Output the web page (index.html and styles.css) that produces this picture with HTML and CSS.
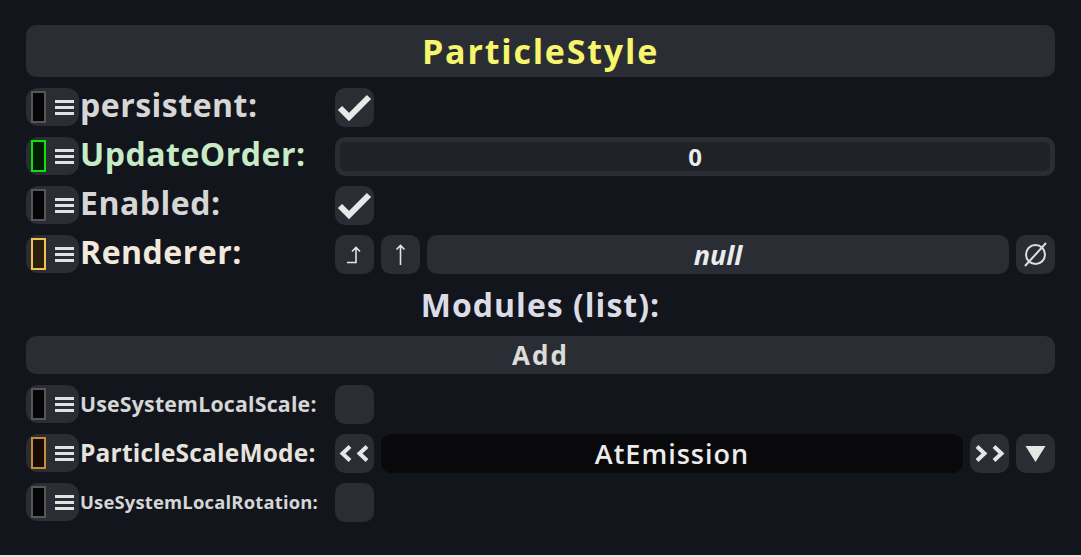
FILE: index.html
```html
<!DOCTYPE html>
<html lang="en">

<head>
    <meta charset="utf-8">
    <meta name="viewport" content="width=device-width, initial-scale=1.0">
    <title>ParticleStyle</title>
    <link rel="stylesheet" href="styles.css">
</head>

<body>
    <main class="panel">
        <h1 class="title">ParticleStyle</h1>

        <!-- persistent -->
        <div class="row">
            <div class="handle"><span class="swatch"></span><span class="burger"><i></i><i></i><i></i></span></div>
            <div class="label">persistent:</div>
            <div class="value">
                <button class="btn">
                    <svg viewBox="0 0 39 39"><polyline points="5,20 14,29 34,9" /></svg>
                </button>
            </div>
        </div>

        <div class="row">
            <div class="handle"><span class="swatch green"></span><span class="burger"><i></i><i></i><i></i></span></div>
            <div class="label label_green">UpdateOrder:</div>
            <div class="value">
                <div class="numfield">0</div>
            </div>
        </div>

        <div class="row">
            <div class="handle"><span class="swatch"></span><span class="burger"><i></i><i></i><i></i></span></div>
            <div class="label">Enabled:</div>
            <div class="value">
                <button class="btn">
                    <svg viewBox="0 0 39 39"><polyline points="5,20 14,29 34,9" /></svg>
                </button>
            </div>
        </div>

        <div class="row">
            <div class="handle"><span class="swatch gold"></span><span class="burger"><i></i><i></i><i></i></span></div>
            <div class="label label_cream">Renderer:</div>
            <div class="value">
                <button class="btn">
                    <svg viewBox="0 0 39 39" class="thin"><path d="M12 27.5 H21 V12.5 M17 16.5 L21 12.5 L25 16.5" /></svg>
                </button>
                <button class="btn">
                    <svg viewBox="0 0 39 39" class="thin"><path d="M19.5 30 V10.5 M15.5 14.5 L19.5 10.5 L23.5 14.5" /></svg>
                </button>
                <div class="field"><em>null</em></div>
                <button class="btn">
                    <svg viewBox="0 0 39 39" class="null"><circle cx="19.5" cy="19.5" r="9.5" /><path d="M9 31 L30 8" /></svg>
                </button>
            </div>
        </div>

        <div class="list_title">Modules (list):</div>

        <button class="add">Add</button>

        <div class="row">
            <div class="handle"><span class="swatch"></span><span class="burger"><i></i><i></i><i></i></span></div>
            <div class="label label_small">UseSystemLocalScale:</div>
            <div class="value">
                <button class="btn"></button>
            </div>
        </div>

        <div class="row">
            <div class="handle"><span class="swatch amber"></span><span class="burger"><i></i><i></i><i></i></span></div>
            <div class="label label_mid">ParticleScaleMode:</div>
            <div class="value">
                <button class="btn">
                    <svg viewBox="0 0 39 39" class="chev"><path d="M15 12.5 L7.5 19.5 L15 26.5 M32 12.5 L24.5 19.5 L32 26.5" /></svg>
                </button>
                <div class="field dark">AtEmission</div>
                <button class="btn">
                    <svg viewBox="0 0 39 39" class="chev"><path d="M7 12.5 L14.5 19.5 L7 26.5 M24 12.5 L31.5 19.5 L24 26.5" /></svg>
                </button>
                <button class="btn">
                    <svg viewBox="0 0 39 39" class="tri"><polygon points="9.5,12 29.5,12 19.5,28" /></svg>
                </button>
            </div>
        </div>

        <div class="row">
            <div class="handle"><span class="swatch"></span><span class="burger"><i></i><i></i><i></i></span></div>
            <div class="label label_tiny">UseSystemLocalRotation:</div>
            <div class="value">
                <button class="btn"></button>
            </div>
        </div>
    </main>
</body>

</html>
```

FILE: styles.css
```css
/* page */

html {
    background-color: #e4e4e4;
}

body {
    margin: 0;
    height: 555px;
    background-color: #12151c;
    font-family: "Open Sans", "Liberation Sans", sans-serif;
    color: #d8d8d8;
}

.panel {
    display: flex;
    flex-direction: column;
    gap: 11px;
    padding: 25px 26px 0 26px;
}

/* header */

.title {
    margin: 0;
    height: 52px;
    display: flex;
    align-items: center;
    justify-content: center;
    background-color: #2b2d35;
    border-radius: 10px;
    font-size: 34px;
    font-weight: 700;
    color: #f6f56c;
    letter-spacing: 1.8px;
}

/* rows */

.row {
    display: flex;
    align-items: center;
    height: 38px;
}

.handle {
    width: 53px;
    height: 38px;
    flex: none;
    display: flex;
    align-items: center;
    gap: 9px;
    padding-left: 5px;
    box-sizing: border-box;
    background-color: #2b2d35;
    border-radius: 12px;
}

.swatch {
    width: 15px;
    height: 32px;
    box-sizing: border-box;
    border: 2px solid #56565a;
    background-color: #050505;
}

.swatch.green {
    border-color: #0ee00e;
    background-color: #021e02;
}

.swatch.gold {
    border-color: #f2c24e;
    background-color: #2a1f0a;
}

.swatch.amber {
    border-color: #c68c3a;
    background-color: #170c04;
}

.burger {
    display: flex;
    flex-direction: column;
    gap: 3px;
    width: 19px;
}

.burger i {
    display: block;
    height: 3px;
    background-color: #e2e2e2;
}

.label {
    width: 256px;
    flex: none;
    padding-left: 1px;
    padding-bottom: 4px;
    box-sizing: border-box;
    font-size: 32px;
    font-weight: 700;
    letter-spacing: 0.5px;
    white-space: nowrap;
    color: #d6d6d6;
    line-height: 34px;
}

.label_green {
    color: #c6ebc6;
}

.label_cream {
    color: #f2e9dc;
}

/* smaller labels, shrunk to fit the column */
.label_mid,
.label_small,
.label_tiny {
    padding-bottom: 0;
    line-height: 38px;
    letter-spacing: 0.2px;
}

.label_mid {
    font-size: 24.5px;
    color: #e6e3dc;
}

.label_small {
    font-size: 21.3px;
}

.label_tiny {
    font-size: 18.4px;
}

.value {
    flex: 1;
    display: flex;
    gap: 7px;
    height: 39px;
}

/* buttons / fields */

.btn {
    width: 39px;
    height: 39px;
    flex: none;
    padding: 0;
    border: none;
    border-radius: 10px;
    background-color: #2b2d35;
}

.btn svg {
    display: block;
    width: 39px;
    height: 39px;
}

.btn polyline {
    fill: none;
    stroke: #e8e8e8;
    stroke-width: 6;
}

.thin path {
    fill: none;
    stroke: #e4e4e4;
    stroke-width: 1.6;
}

.null circle,
.null path {
    fill: none;
    stroke: #dedede;
    stroke-width: 2;
}

.chev path {
    fill: none;
    stroke: #e6e6e6;
    stroke-width: 4;
}

.tri polygon {
    fill: #e6e6e6;
}

.numfield {
    flex: 1;
    display: flex;
    align-items: center;
    justify-content: center;
    border: 5px solid #2b2d35;
    border-radius: 10px;
    background-color: #202227;
    font-size: 24px;
    font-weight: 700;
    color: #ececec;
}

.field {
    flex: 1;
    display: flex;
    align-items: center;
    justify-content: center;
    border-radius: 10px;
    background-color: #2b2d35;
    font-size: 27px;
    font-weight: 700;
    color: #ececec;
}

.field.dark {
    background-color: #09090b;
    font-size: 27px;
    font-weight: 600;
    letter-spacing: 1px;
}

.list_title {
    height: 41px;
    display: flex;
    align-items: center;
    justify-content: center;
    font-size: 32px;
    font-weight: 700;
    letter-spacing: 1px;
    color: #dcdce6;
}

.add {
    height: 38px;
    padding: 0;
    border: none;
    border-radius: 10px;
    background-color: #2b2d35;
    font-family: "Open Sans", "Liberation Sans", sans-serif;
    font-size: 26px;
    font-weight: 700;
    letter-spacing: 2px;
    color: #dcdcd8;
}
```
